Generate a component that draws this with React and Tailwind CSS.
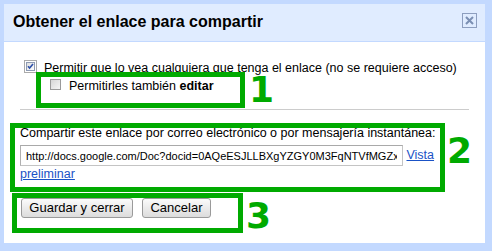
import React from "react";

function CheckedBox() {
  return (
    <svg width="13" height="13" viewBox="0 0 13 13" className="block shrink-0">
      <defs>
        <linearGradient id="cb1" x1="0" y1="0" x2="1" y2="1">
          <stop offset="0" stopColor="#dcdcdc" />
          <stop offset="1" stopColor="#ffffff" />
        </linearGradient>
      </defs>
      <rect x="0.5" y="0.5" width="12" height="12" fill="none" stroke="#555" strokeDasharray="1 1" />
      <rect x="2.5" y="2.5" width="8" height="8" fill="url(#cb1)" stroke="#8e9bb3" />
      <path d="M4 6.3 L5.6 8 L9 4" fill="none" stroke="#2c4fa8" strokeWidth="1.6" />
    </svg>
  );
}

function EmptyBox() {
  return (
    <svg width="11" height="11" viewBox="0 0 11 11" className="block shrink-0">
      <defs>
        <linearGradient id="cb2" x1="0" y1="0" x2="1" y2="1">
          <stop offset="0" stopColor="#d4d4d4" />
          <stop offset="1" stopColor="#f7f7f7" />
        </linearGradient>
      </defs>
      <rect x="0.5" y="0.5" width="10" height="10" fill="url(#cb2)" stroke="#9a9a9a" />
    </svg>
  );
}

export default function App() {
  return (
    <div className="relative h-[251px] w-[492px] overflow-hidden bg-[#c3d9ff] pt-[4px] pr-[7px] pb-[8px] pl-[4px] font-['Liberation_Sans',Arial,sans-serif] text-black">
      <div className="flex h-full flex-col bg-white">
        <div className="flex h-[38px] shrink-0 items-start justify-between border-b border-[#c3d9ff] bg-[#e0ecff] pr-[8px] pl-[9px]">
          <h1 className="mt-[9px] text-[16px] leading-[18px] font-bold">Obtener el enlace para compartir</h1>
          <button className="mt-[9px] block h-[15px] w-[15px]" aria-label="Cerrar">
            <svg width="15" height="15" viewBox="0 0 15 15" className="block">
              <rect x="0.5" y="0.5" width="14" height="14" fill="none" stroke="#8d9ebf" />
              <path d="M4 4 L11 11 M11 4 L4 11" stroke="#7b8fb3" strokeWidth="2" />
            </svg>
          </button>
        </div>

        <div className="flex flex-col px-[16px] pt-[18px] text-[12.5px] leading-[16px]">
          <label className="flex items-start pl-[4px]">
            <CheckedBox />
            <span className="ml-[7px] whitespace-nowrap">Permitir que lo vea cualquiera que tenga el enlace (no se requiere acceso)</span>
          </label>
          <label className="mt-[3px] flex items-start pl-[30px]">
            <EmptyBox />
            <span className="ml-[8px] -mt-px whitespace-nowrap">
              Permitirles también <b>editar</b>
            </span>
          </label>

          <div className="mt-[15px] h-px bg-[#cccccc]" />

          <p className="mt-[15px] whitespace-nowrap">Compartir este enlace por correo electrónico o por mensajería instantánea:</p>
          <div className="mt-[4px]">
            <input
              readOnly
              value="http://docs.google.com/Doc?docid=0AQeESJLLBXgYZGY0M3FqNTVfMGZxZGZ0ZmRj&hl=es"
              className="inline-block h-[21px] w-[383px] border border-[#c4c4c4] border-t-[#a9a9a9] border-l-[#b0b0b0] px-[5px] align-middle text-[11px] text-black outline-none"
            />{" "}
            <a href="#" className="text-[#1a52c6] underline">Vista preliminar</a>
          </div>

          <div className="mt-[16px] flex gap-[9px] pl-[1px]">
            <button className="h-[20px] w-[112px] rounded-[3px] border border-[#9a9a9a] bg-gradient-to-b from-[#fbfbfb] to-[#dcdcdc] text-[13px] leading-[18px] text-black">
              Guardar y cerrar
            </button>
            <button className="h-[20px] w-[69px] rounded-[3px] border border-[#9a9a9a] bg-gradient-to-b from-[#fbfbfb] to-[#dcdcdc] text-[13px] leading-[18px] text-black">
              Cancelar
            </button>
          </div>
        </div>
      </div>

      {/* Annotation overlays */}
      <div className="absolute top-[72px] left-[36px] h-[36px] w-[209px] border-[5px] border-[#00aa00]" />
      <div className="absolute top-[72px] left-[249px] font-['DejaVu_Sans',Verdana,sans-serif] text-[36px] leading-[36px] font-bold text-[#00aa00]">1</div>

      <div className="absolute top-[123px] left-[10px] h-[69px] w-[435px] border-[5px] border-[#00aa00]" />
      <div className="absolute top-[133px] left-[447px] font-['DejaVu_Sans',Verdana,sans-serif] text-[36px] leading-[36px] font-bold text-[#00aa00]">2</div>

      <div className="absolute top-[193px] left-[12px] h-[40px] w-[231px] border-[5px] border-[#00aa00]" />
      <div className="absolute top-[198px] left-[246px] font-['DejaVu_Sans',Verdana,sans-serif] text-[36px] leading-[36px] font-bold text-[#00aa00]">3</div>
    </div>
  );
}
